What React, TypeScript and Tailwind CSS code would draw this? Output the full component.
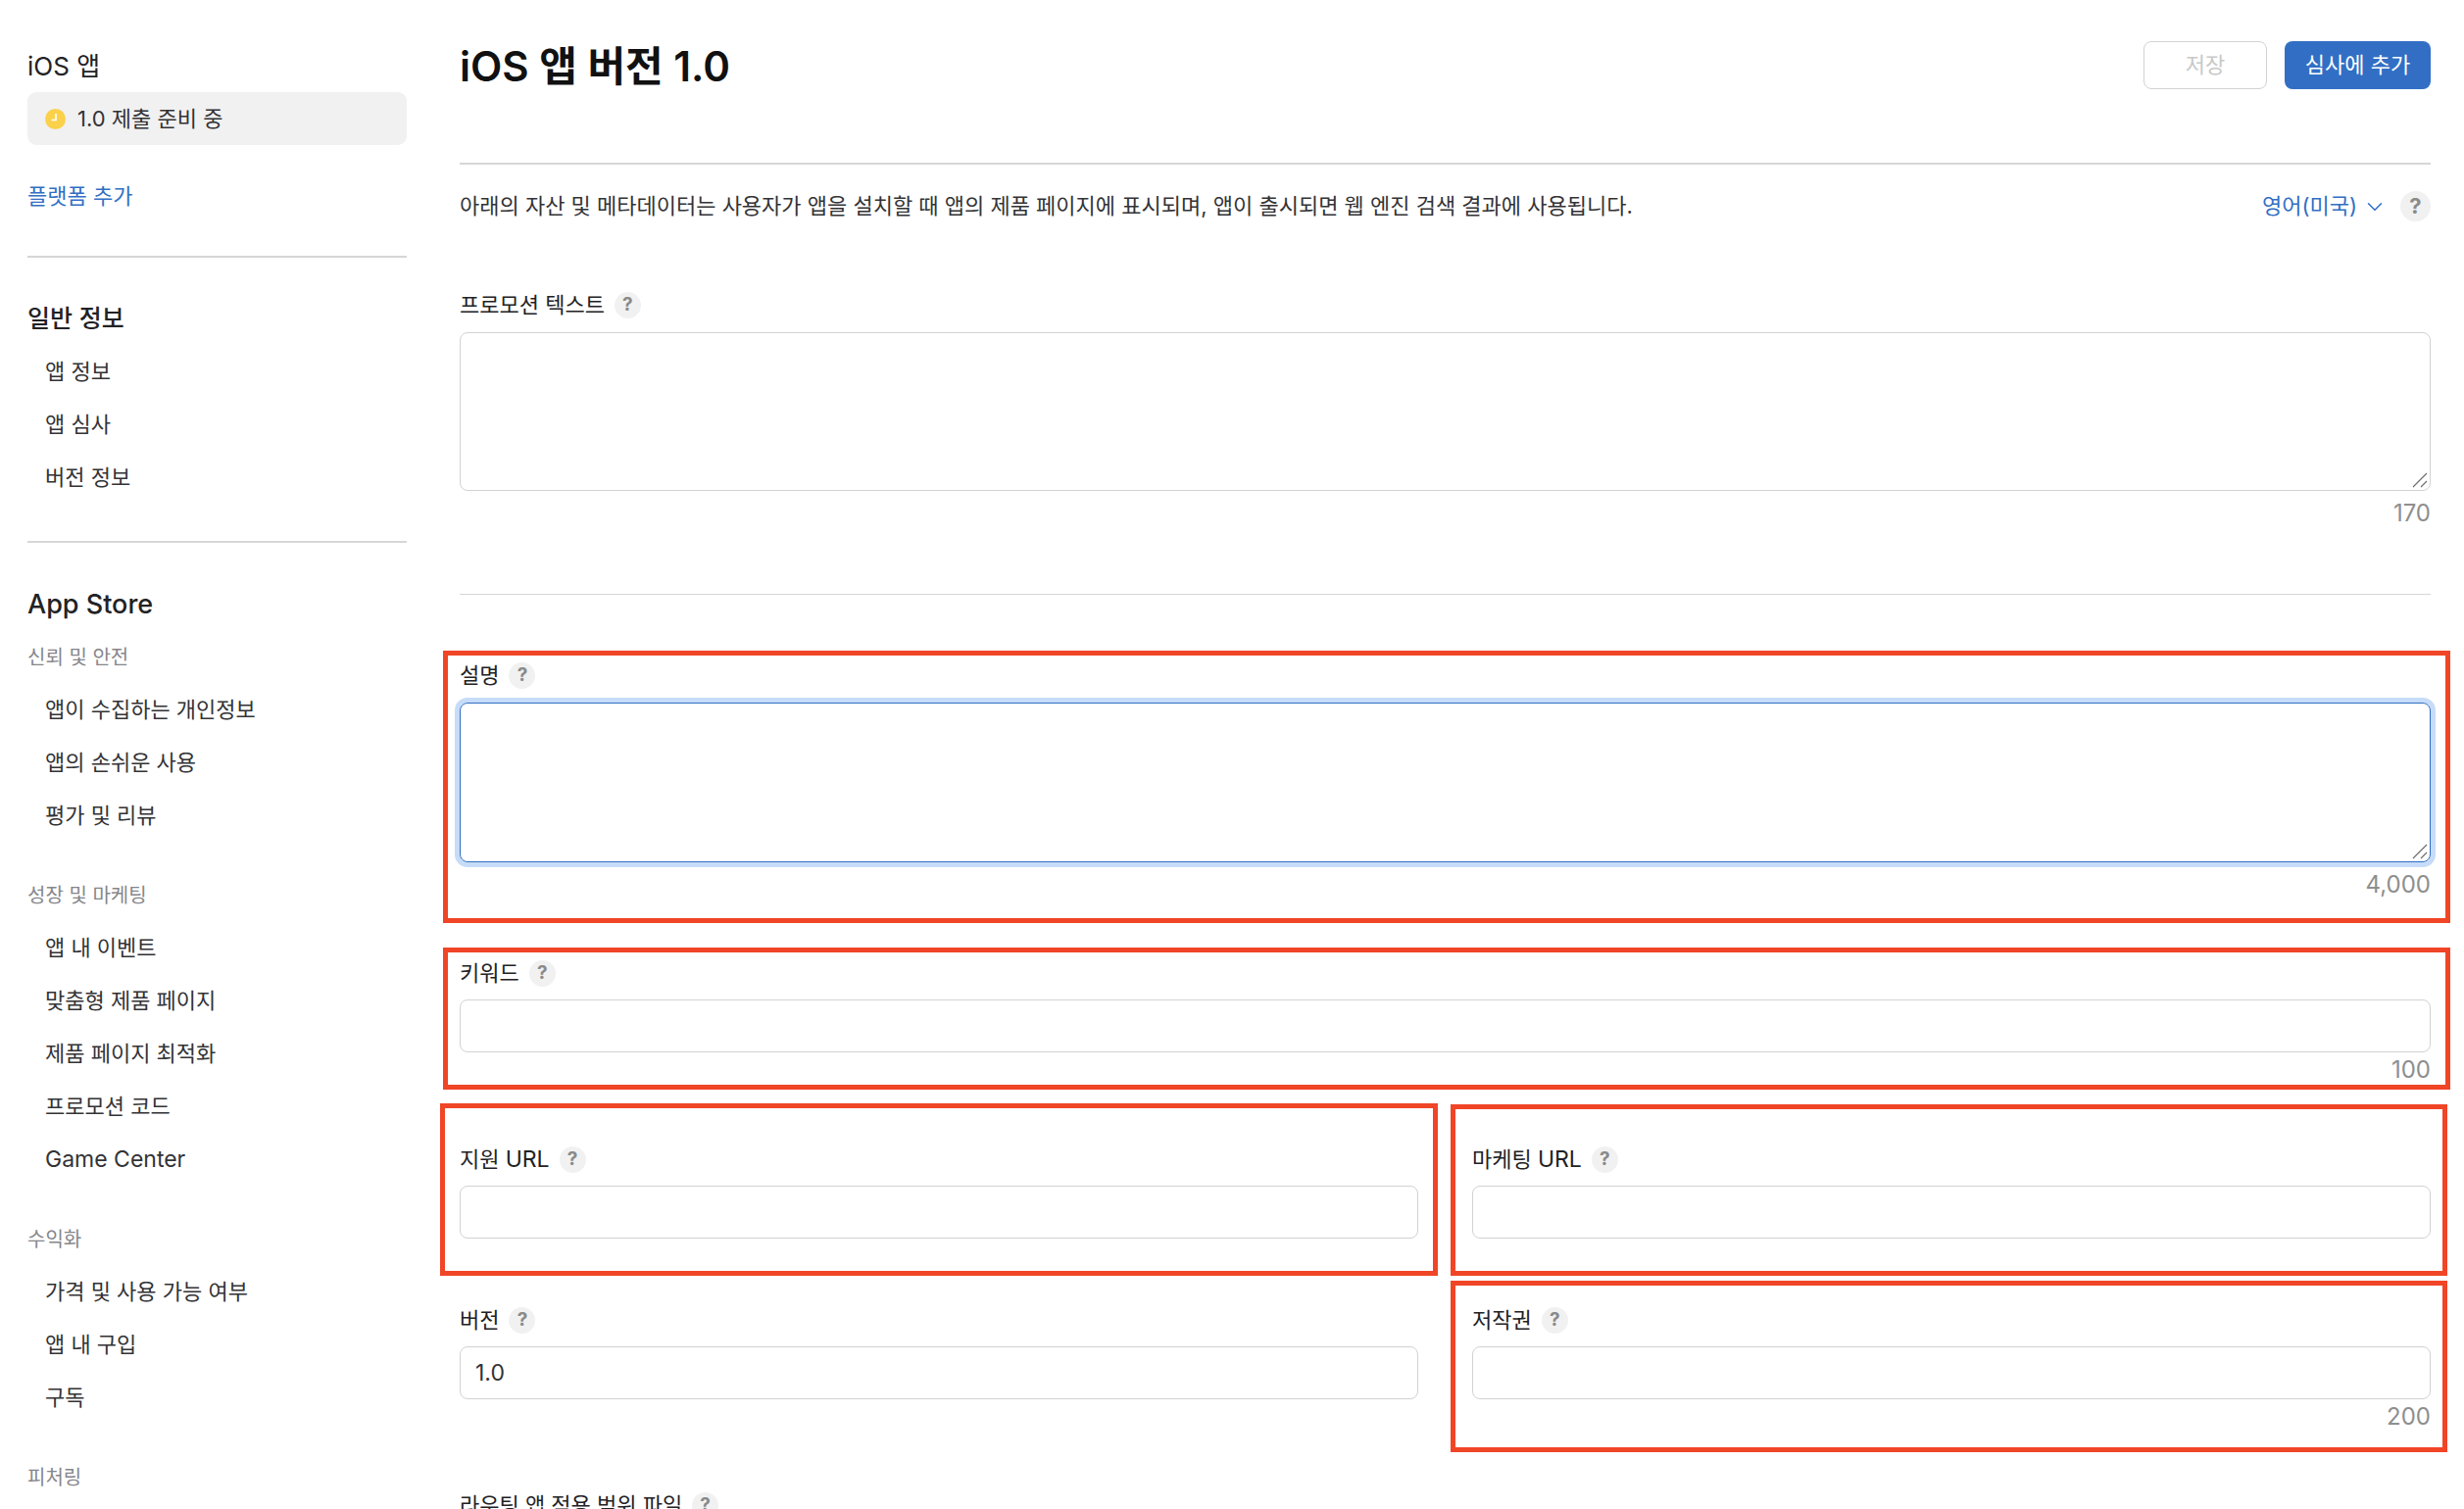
import { ChevronDown } from "lucide-react";
import type { ReactNode } from "react";

const font = "font-['Inter','Noto_Sans_CJK_KR',sans-serif]";

function Help({ big }: { big?: boolean }) {
  return (
    <span
      className={
        big
          ? "flex h-[31px] w-[31px] items-center justify-center rounded-full bg-[#f1f1f1] text-[22px] font-bold text-[#8a8a8a]"
          : "flex h-[27px] w-[27px] items-center justify-center rounded-full bg-[#f1f1f1] text-[19px] font-bold text-[#8a8a8a]"
      }
    >
      ?
    </span>
  );
}

function Label({ text, className }: { text: ReactNode; className?: string }) {
  return (
    <div className={"flex h-[27px] items-center gap-[10px] " + (className ?? "")}>
      <span className="text-[22px] font-normal leading-[27px] text-[#222225]">{text}</span>
      <Help />
    </div>
  );
}

function Count({ value, tall }: { value: string; tall?: boolean }) {
  return (
    <div className={(tall ? "mt-[9px]" : "mt-[4px]") + " h-[28px] text-right text-[24px] leading-[28px] text-[#8e8e8e]"}>
      {value}
    </div>
  );
}

function Grip() {
  return (
    <svg className="absolute bottom-[2px] right-[2px]" width="16" height="16" viewBox="0 0 16 16" fill="none" stroke="#6e6e6e" strokeWidth="1.2">
      <path d="M1 15 15 1M9 15l6-6" />
    </svg>
  );
}

function Side({ text, latin }: { text: string; latin?: boolean }) {
  return (
    <div className={"flex h-[54px] items-center pl-[18px] text-[#333336] " + (latin ? "text-[23px]" : "text-[22px]")}>
      {text}
    </div>
  );
}

function SideGroup({ text }: { text: string }) {
  return <div className="flex h-[28px] items-center text-[20px] text-[#86868b]">{text}</div>;
}

function Divider() {
  return <div className="h-[2px] bg-[#d6d6d6]" />;
}

function Sidebar() {
  return (
    <aside className="w-[387px] shrink-0 pt-[51px]">
      <div className="flex h-[32px] items-center text-[26px] font-normal text-[#222225]">iOS 앱</div>
      <div className="mt-[11px] flex h-[54px] items-center gap-[12px] rounded-[9px] bg-[#f1f1f1] pl-[18px] text-[22px] text-[#333336]">
        <svg width="21" height="21" viewBox="0 0 21 21">
          <circle cx="10.5" cy="10.5" r="10.5" fill="#fbd04b" />
          <path d="M11 5v6.5H6.5" fill="none" stroke="#fff" strokeWidth="1.6" />
        </svg>
        1.0 제출 준비 중
      </div>
      <div className="mt-[37px] flex h-[30px] items-center text-[22px] text-[#326fc4]">플랫폼 추가</div>
      <div className="mt-[46px]">
        <Divider />
      </div>
      <div className="mt-[47px] flex h-[32px] items-center text-[25px] font-medium text-[#222225]">일반 정보</div>
      <div className="mt-[10px]">
        <Side text="앱 정보" />
        <Side text="앱 심사" />
        <Side text="버전 정보" />
      </div>
      <div className="mt-[38px]">
        <Divider />
      </div>
      <div className="mt-[47px] flex h-[32px] items-center text-[27px] font-medium text-[#222225]">App Store</div>
      <div className="mt-[24px]">
        <SideGroup text="신뢰 및 안전" />
      </div>
      <div className="mt-[12px]">
        <Side text="앱이 수집하는 개인정보" />
        <Side text="앱의 손쉬운 사용" />
        <Side text="평가 및 리뷰" />
      </div>
      <div className="mt-[41px]">
        <SideGroup text="성장 및 마케팅" />
      </div>
      <div className="mt-[12px]">
        <Side text="앱 내 이벤트" />
        <Side text="맞춤형 제품 페이지" />
        <Side text="제품 페이지 최적화" />
        <Side text="프로모션 코드" />
        <Side text="Game Center" latin />
      </div>
      <div className="mt-[41px]">
        <SideGroup text="수익화" />
      </div>
      <div className="mt-[12px]">
        <Side text="가격 및 사용 가능 여부" />
        <Side text="앱 내 구입" />
        <Side text="구독" />
      </div>
      <div className="mt-[41px]">
        <SideGroup text="피처링" />
      </div>
    </aside>
  );
}

function Input({ value }: { value?: string }) {
  return (
    <div className="mt-[13px] flex h-[54px] items-center rounded-[8px] border border-[#d2d2d2] px-[15px] text-[23px] text-[#333336]">
      {value}
    </div>
  );
}

function Main() {
  return (
    <main className="min-w-0 flex-1 pl-[54px]">
      <div className="flex h-[168px] items-start justify-between border-b-2 border-[#d6d6d6] pt-[42px]">
        <h1 className="text-[42px] font-semibold leading-[52px] text-[#111]">iOS 앱 버전 1.0</h1>
        <div className="flex gap-[18px]">
          <div className="flex h-[49px] w-[126px] items-center justify-center rounded-[8px] border border-[#d2d2d2] text-[22px] text-[#c8c8c8]">저장</div>
          <div className="flex h-[49px] w-[149px] items-center justify-center rounded-[8px] bg-[#326fc4] text-[22px] text-white">심사에 추가</div>
        </div>
      </div>
      <div className="mt-[26px] flex h-[33px] items-center justify-between">
        <p className="text-[22px] text-[#333336]">
          아래의 자산 및 메타데이터는 사용자가 앱을 설치할 때 앱의 제품 페이지에 표시되며, 앱이 출시되면 웹 엔진 검색 결과에 사용됩니다.
        </p>
        <div className="flex items-center gap-[13px]">
          <div className="flex items-center gap-[5px] text-[22px] text-[#326fc4]">
            영어(미국)
            <ChevronDown size={26} strokeWidth={1.4} />
          </div>
          <Help big />
        </div>
      </div>

      <Label text="프로모션 텍스트" className="mt-[71px]" />
      <div className="relative mt-[14px] h-[162px] rounded-[8px] border border-[#d2d2d2]">
        <Grip />
      </div>
      <Count value="170" tall />
      <div className="mt-[68px] h-px bg-[#d6d6d6]" />

      <Label text="설명" className="mt-[69px]" />
      <div className="relative mt-[14px] h-[163px] rounded-[8px] border border-[#326fc4] shadow-[0_0_0_5px_#c6dcf8]">
        <Grip />
      </div>
      <Count value="4,000" tall />

      <Label text="키워드" className="mt-[63px]" />
      <Input />
      <Count value="100" />

      <div className="mt-[64px] grid grid-cols-2 gap-x-[55px]">
        <div>
          <Label text={<>지원 <span className="text-[23px]">URL</span></>} />
          <Input />
        </div>
        <div>
          <Label text={<>마케팅 <span className="text-[23px]">URL</span></>} />
          <Input />
        </div>
        <div className="mt-[70px]">
          <Label text="버전" />
          <Input value="1.0" />
        </div>
        <div className="mt-[70px]">
          <Label text="저작권" />
          <Input />
          <Count value="200" />
        </div>
      </div>
      <Label text="라우팅 앱 적용 범위 파일" className="mt-[63px]" />
    </main>
  );
}

export default function App() {
  return (
    <div className={"relative flex h-[1540px] w-[2514px] overflow-hidden bg-white pl-[28px] pr-[34px] " + font}>
      <Sidebar />
      <Main />
      {/* red annotation boxes drawn over the form */}
      <div className="pointer-events-none absolute left-[452px] top-[664px] h-[278px] w-[2048px] border-[5px] border-[#f04527]" />
      <div className="pointer-events-none absolute left-[452px] top-[967px] h-[145px] w-[2048px] border-[5px] border-[#f04527]" />
      <div className="pointer-events-none absolute left-[449px] top-[1126px] h-[176px] w-[1018px] border-[5px] border-[#f04527]" />
      <div className="pointer-events-none absolute left-[1480px] top-[1127px] h-[175px] w-[1017px] border-[5px] border-[#f04527]" />
      <div className="pointer-events-none absolute left-[1480px] top-[1307px] h-[175px] w-[1017px] border-[5px] border-[#f04527]" />
    </div>
  );
}
